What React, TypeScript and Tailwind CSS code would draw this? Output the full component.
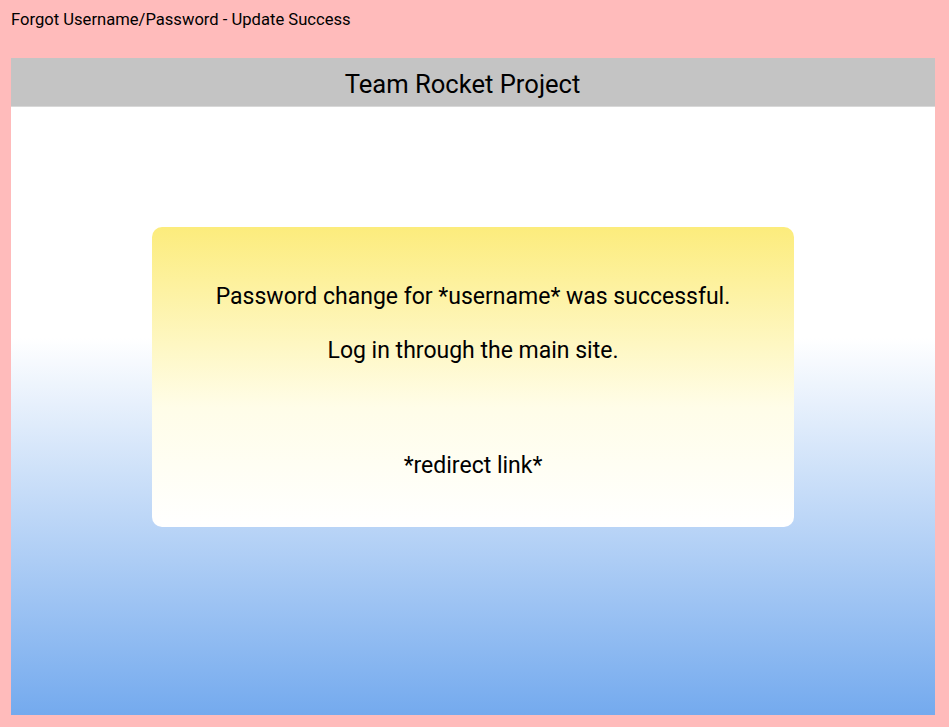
export default function App() {
  return (
    <div className="flex h-[727px] w-[949px] flex-col bg-[#ffbbbb] font-['Roboto',sans-serif] text-black">
      <div className="h-[58px] px-[11px] pt-[9px] text-[16.6px] leading-[22px]">
        Forgot Username/Password - Update Success
      </div>

      <div className="ml-[11px] mr-[14px] mb-[12px] flex flex-1 flex-col">
        <header className="flex h-[49px] items-center justify-center border-b border-[#d8d8d8] bg-[#c4c4c4] pr-[21px] pt-[4px] text-[25.6px]">
          Team Rocket Project
        </header>

        <main className="flex flex-1 justify-center bg-[linear-gradient(to_bottom,#ffffff_38%,#74aaee_100%)] pt-[120px]">
          <div className="flex h-[300px] w-[642px] flex-col items-center rounded-[10px] bg-[linear-gradient(to_bottom,#fcec7c_0%,#fffde8_60%,#ffffff_100%)] pt-[56px] text-[23px] leading-[28px]">
            <p>Password change for *username* was successful.</p>
            <p className="mt-[26px]">Log in through the main site.</p>
            <p className="mt-[87px]">*redirect link*</p>
          </div>
        </main>
      </div>
    </div>
  )
}
